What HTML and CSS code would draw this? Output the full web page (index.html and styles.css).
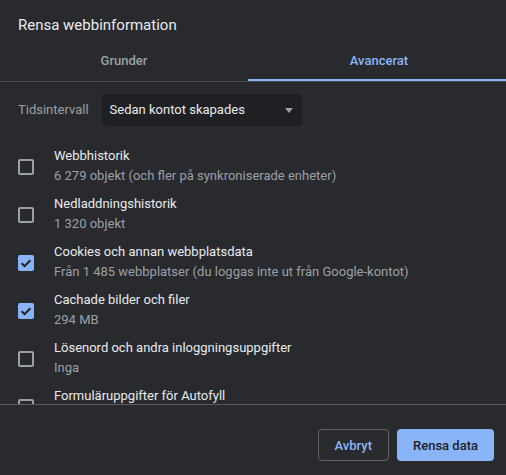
FILE: index.html
```html
<!DOCTYPE html>
<html lang="sv">
<head>
<meta charset="utf-8">
<title>Rensa webbinformation</title>
<link rel="stylesheet" href="styles.css">
</head>
<body>
<div class="dialog">
  <h1 class="title">Rensa webbinformation</h1>
  <div class="tabs">
    <div class="tab first">Grunder</div>
    <div class="tab active">Avancerat</div>
  </div>
  <div class="content">
    <div class="range">
      <span class="range-label">Tidsintervall</span>
      <div class="select">
        <span>Sedan kontot skapades</span>
        <span class="arrow"></span>
      </div>
    </div>
    <div class="list">
      <div class="row">
        <span class="box"></span>
        <div class="text"><div class="label">Webbhistorik</div><div class="sub">6 279 objekt (och fler på synkroniserade enheter)</div></div>
      </div>
      <div class="row">
        <span class="box"></span>
        <div class="text"><div class="label">Nedladdningshistorik</div><div class="sub">1 320 objekt</div></div>
      </div>
      <div class="row">
        <span class="box checked"><svg viewBox="0 0 16 16" width="16" height="16"><path d="M3.6 8.2 L6.6 11.1 L12.4 5.2" fill="none" stroke="#202124" stroke-width="2"/></svg></span>
        <div class="text"><div class="label">Cookies och annan webbplatsdata</div><div class="sub">Från 1 485 webbplatser (du loggas inte ut från Google-kontot)</div></div>
      </div>
      <div class="row">
        <span class="box checked"><svg viewBox="0 0 16 16" width="16" height="16"><path d="M3.6 8.2 L6.6 11.1 L12.4 5.2" fill="none" stroke="#202124" stroke-width="2"/></svg></span>
        <div class="text"><div class="label">Cachade bilder och filer</div><div class="sub">294 MB</div></div>
      </div>
      <div class="row">
        <span class="box"></span>
        <div class="text"><div class="label">Lösenord och andra inloggningsuppgifter</div><div class="sub">Inga</div></div>
      </div>
      <div class="row">
        <span class="box"></span>
        <div class="text"><div class="label">Formuläruppgifter för Autofyll</div><div class="sub">&nbsp;</div></div>
      </div>
    </div>
  </div>
  <div class="footer">
    <button class="btn cancel">Avbryt</button>
    <button class="btn action">Rensa data</button>
  </div>
</div>
</body>
</html>
```
FILE: styles.css
```css
html, body {
  margin: 0;
  padding: 0;
  background: #292a2d;
}
body {
  font-family: Roboto, "Liberation Sans", sans-serif;
  font-size: 13px;
  color: #e8eaed;
}
.dialog {
  width: 506px;
  height: 475px;
  display: flex;
  flex-direction: column;
  overflow: hidden;
}
.title {
  margin: 0;
  padding: 15px 18px 7px 18px;
  font-size: 15px;
  line-height: 20px;
  font-weight: 400;
  color: #e8eaed;
}
.tabs {
  display: flex;
  border-bottom: 1px solid #45474b;
}
.tab {
  flex: 1;
  height: 39px;
  box-sizing: border-box;
  padding-top: 9px;
  text-align: center;
  line-height: 20px;
  font-weight: 500;
  color: #9aa0a6;
}
.tab.first {
  flex: none;
  width: 248px;
}
.tab.active {
  color: #8ab4f8;
  border-bottom: 2px solid #8ab4f8;
  padding-left: 4px;
}
.content {
  height: 322px;
  overflow: hidden;
  flex: none;
}
.range {
  display: flex;
  align-items: center;
  gap: 13px;
  margin-top: 12px;
  padding-left: 18px;
}
.range-label {
  color: #9aa0a6;
  line-height: 20px;
}
.select {
  width: 200px;
  height: 32px;
  box-sizing: border-box;
  background: #1f2023;
  border-radius: 4px;
  display: flex;
  align-items: center;
  justify-content: space-between;
  padding: 0 9px 0 8px;
  color: #e8eaed;
  line-height: 20px;
}
.arrow {
  width: 0;
  height: 0;
  border-left: 4.5px solid transparent;
  border-right: 4.5px solid transparent;
  border-top: 5px solid #9aa0a6;
}
.list {
  margin-top: 16px;
}
.row {
  display: flex;
  align-items: flex-start;
  gap: 20px;
  padding: 4px 0 4px 18px;
  height: 48px;
  box-sizing: border-box;
}
.box {
  flex: none;
  width: 16px;
  height: 16px;
  box-sizing: border-box;
  border: 2px solid #9aa0a6;
  border-radius: 2px;
  margin-top: 13px;
}
.box.checked {
  border: none;
  background: #8ab4f8;
}
.box svg {
  display: block;
}
.text {
  line-height: 20px;
}
.label {
  color: #e8eaed;
}
.sub {
  color: #9aa0a6;
}
.footer {
  border-top: 1px solid #5a5c60;
  display: flex;
  justify-content: flex-end;
  gap: 8px;
  padding: 24px 12px 14px;
}
.btn {
  font-family: Roboto, "Liberation Sans", sans-serif;
  font-size: 13px;
  font-weight: 500;
  height: 32px;
  border-radius: 4px;
  box-sizing: border-box;
  padding: 0 16px;
  cursor: pointer;
}
.cancel {
  background: transparent;
  border: 1px solid #5f6368;
  color: #8ab4f8;
}
.action {
  background: #8ab4f8;
  border: none;
  color: #202124;
}
```
